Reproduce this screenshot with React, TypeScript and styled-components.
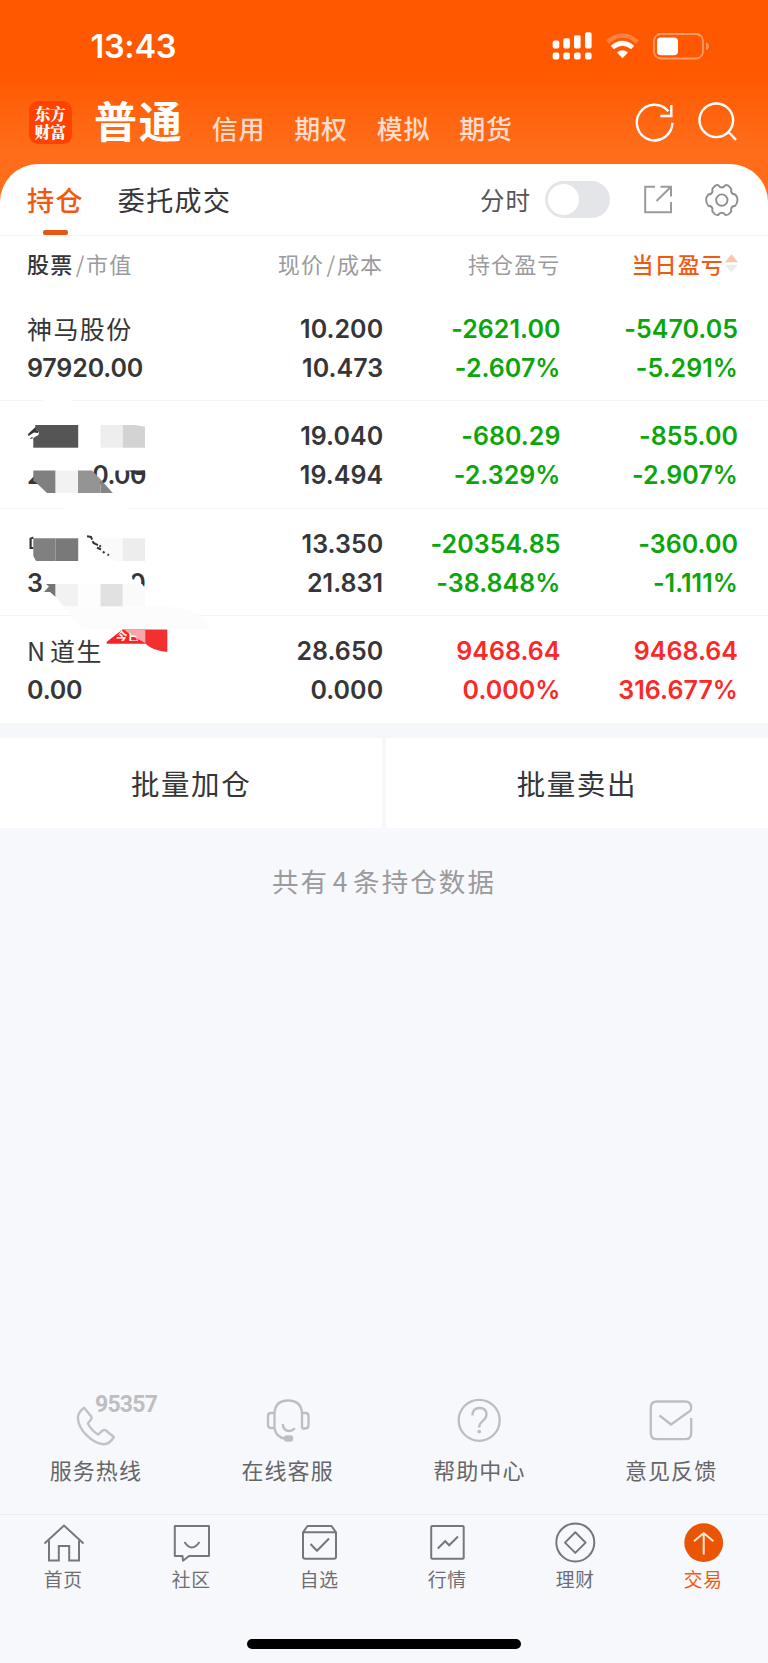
import React from 'react';
import styled, { createGlobalStyle } from 'styled-components';

const cjk = '"Noto Sans CJK SC", "Noto Sans", sans-serif';
const latin = 'Inter, "Noto Sans CJK SC", sans-serif';
const ORANGE = '#f05a10';
const GREEN = '#0ca50c';
const RED = '#fb2828';
const INK = '#363638';

const GlobalStyle = createGlobalStyle`
  * { box-sizing: border-box; }
  body { margin: 0; background: #f7f8fb; font-family: ${cjk}; color: ${INK}; }
  svg { display: block; flex: none; overflow: visible; }
`;

const Screen = styled.div`
  width: 768px;
  height: 1663px;
  display: flex;
  flex-direction: column;
  overflow: hidden;
  background: #f7f8fb;
`;

const Top = styled.header`
  flex: none;
  background: linear-gradient(#ff5800 0, #ff5800 72px, #ff6d1a 150px, #ff6d1a 100%);
`;

const StatusBar = styled.div`
  height: 92px;
  padding: 0 59px 0 90.5px;
  display: flex;
  align-items: center;
  color: #fff;
`;

const Clock = styled.time`
  font: 600 32.5px/40px ${latin};
  letter-spacing: -0.3px;
  margin-right: auto;
  padding-top: 2px;
`;

const NavBar = styled.nav`
  height: 71.5px;
  padding: 0 31px 0 29px;
  display: flex;
  align-items: flex-start;
`;

const Logo = styled.div`
  width: 43px;
  height: 43px;
  margin-top: 9px;
  padding: 4px 5.5px;
  border-radius: 9px;
  background: #ff4200;
  color: #fff;
  font: 900 15.8px/17.5px "Noto Serif CJK SC", ${cjk};
  flex: none;
`;

const AccountMain = styled.div`
  margin-left: 22px;
  font-size: 43px;
  line-height: 55px;
  font-weight: 700;
  letter-spacing: 1.8px;
  color: #fff;
  width: 93px;
  white-space: nowrap;
`;

const Account = styled.div`
  margin-top: 16px;
  width: 82.5px;
  padding-left: 2px;
  font-size: 26px;
  line-height: 40px;
  font-weight: 500;
  letter-spacing: 0.8px;
  color: #ffdccb;
  white-space: nowrap;
  transform: translateX(22.8px);
`;

const NavActions = styled.div`
  margin: 10px 0 0 auto;
  display: flex;
  gap: 25px;
`;

const TabRow = styled.div`
  height: 72px;
  padding: 0 29px 0 27px;
  display: flex;
  align-items: center;
  background: #fff;
  border-radius: 38px 38px 0 0;
  border-bottom: 1.5px solid #f3f4f6;
`;

const Tab = styled.div<{ $active?: boolean }>`
  height: 100%;
  margin-right: 34px;
  padding-top: 16px;
  display: flex;
  flex-direction: column;
  align-items: center;
  justify-content: space-between;
  font-size: 27px;
  line-height: 40px;
  letter-spacing: 1.4px;
  font-weight: ${p => (p.$active ? 500 : 400)};
  color: ${p => (p.$active ? ORANGE : INK)};
  &::after {
    content: '';
    width: 25px;
    height: 5px;
    border-radius: 2px;
    background: ${p => (p.$active ? '#e9560f' : 'transparent')};
  }
`;

const SwitchLabel = styled.span`
  margin-left: auto;
  font-size: 24.5px;
  letter-spacing: 1px;
  color: #555558;
`;

const Switch = styled.div`
  width: 65px;
  height: 37px;
  margin: 0 34px 0 14px;
  padding: 3px;
  border-radius: 19px;
  background: #e4e5e8;
  &::before {
    content: '';
    display: block;
    width: 31px;
    height: 31px;
    border-radius: 50%;
    background: #fff;
  }
`;

const Table = styled.main`
  flex: none;
  height: 487px;
  background: #fff;
  position: relative;
`;

const gridCols = `
  display: grid;
  grid-template-columns: 200px 156.2px 177.3px 177.5px;
  padding-left: 27px;
`;

const HeadRow = styled.div`
  ${gridCols}
  height: 58px;
  padding-bottom: 3px;
  align-items: center;
`;

const HeadCell = styled.div<{ $left?: boolean; $active?: boolean }>`
  display: flex;
  justify-content: ${p => (p.$left ? 'flex-start' : 'flex-end')};
  font-size: 22px;
  letter-spacing: 1.15px;
  font-weight: ${p => (p.$active ? 500 : 400)};
  color: ${p => (p.$active ? ORANGE : '#9b9b9d')};
  white-space: nowrap;
  align-items: center;
  b { font-weight: 500; color: ${INK}; }
  i { font-style: normal; margin: 0 0.5px 0 2.5px; }
`;

const Row = styled.div`
  ${gridCols}
  height: 107.6px;
  padding-top: 16.2px;
  border-bottom: 1.5px solid #f4f5f7;
  &:last-of-type { border-bottom: 0; }
`;

const Cell = styled.div<{ $tone?: string; $left?: boolean }>`
  display: flex;
  flex-direction: column;
  align-items: ${p => (p.$left ? 'flex-start' : 'flex-end')};
  font: 600 25px/39px ${latin};
  color: ${p => p.$tone || INK};
`;

const Name = styled.span`
  font: 400 25px/37px ${cjk};
  letter-spacing: 1.4px;
  word-spacing: -3.5px;
  height: 39px;
`;

const Num = styled.span<{ $tight?: boolean }>`
  height: 39px;
  letter-spacing: ${p => (p.$tight ? -0.15 : 0.04)}px;
`;

const Mosaic = styled.svg`
  position: absolute;
  left: 0;
  top: 0;
`;

const Actions = styled.div`
  flex: none;
  display: flex;
  gap: 3.5px;
  padding: 15.5px 0 0;
  background: #f5f7fa;
  height: 105.5px;
`;

const Action = styled.button`
  flex: 1;
  border: 0;
  padding: 0 0 1px 0;
  background: #fff;
  color: ${INK};
  font: 400 28.5px/40px ${cjk};
  letter-spacing: 1.6px;
`;

const Summary = styled.p`
  margin: 32.5px 0 0;
  text-align: center;
  font-size: 26.5px;
  line-height: 40px;
  letter-spacing: 2.1px;
  word-spacing: -4.5px;
  color: #9b9b9d;
`;

const Services = styled.section`
  margin-top: auto;
  flex: none;
  height: 121.5px;
  display: flex;
  padding-right: 1px;
`;

const Service = styled.div`
  width: 191.8px;
  display: flex;
  flex-direction: column;
  align-items: center;
  font-size: 22px;
  line-height: 32px;
  letter-spacing: 1.1px;
  color: #666669;
  svg { margin-bottom: 6px; }
`;

const TabBar = styled.footer`
  flex: none;
  height: 102px;
  display: flex;
  border-top: 1.5px solid #ececef;
`;

const TabItem = styled.div<{ $active?: boolean }>`
  flex: 1;
  padding-top: 7px;
  display: flex;
  flex-direction: column;
  align-items: center;
  font-size: 18.8px;
  line-height: 26px;
  color: ${p => (p.$active ? ORANGE : '#6e6e72')};
  span { letter-spacing: 0.8px; margin-right: 1.5px; }
  svg { margin-bottom: 4px; }
`;

const HomeArea = styled.div`
  flex: none;
  height: 47px;
  padding-top: 23px;
  display: flex;
  justify-content: center;
`;

const HomeIndicator = styled.div`
  width: 274px;
  height: 10px;
  border-radius: 5px;
  background: #000;
`;

const holdings = [
  { name: '神马股份', value: '97920.00', price: '10.200', cost: '10.473', pl: '-2621.00', plp: '-2.607%', day: '-5470.05', dayp: '-5.291%', tone: GREEN },
  { name: '', value: '', price: '19.040', cost: '19.494', pl: '-680.29', plp: '-2.329%', day: '-855.00', dayp: '-2.907%', tone: GREEN },
  { name: '', value: '', price: '13.350', cost: '21.831', pl: '-20354.85', plp: '-38.848%', day: '-360.00', dayp: '-1.111%', tone: GREEN },
  { name: 'N 道生', value: '0.00', price: '28.650', cost: '0.000', pl: '9468.64', plp: '0.000%', day: '9468.64', dayp: '316.677%', tone: RED },
];

const SignalIcon = () => (
  <svg width="40" height="28" viewBox="552 31.5 40 28" fill="#fff" style={{ marginRight: 14 }}>
    <rect x="552.7" y="40" width="6.6" height="8" rx="1.8" />
    <rect x="563.3" y="37.7" width="6.6" height="10.3" rx="1.8" />
    <rect x="574" y="34.7" width="6.6" height="13.3" rx="1.8" />
    <rect x="585" y="31.7" width="6.6" height="16.3" rx="1.8" />
    {[552.7, 563.3, 574, 585].map(x => (
      <rect key={x} x={x} y="52" width="6.6" height="7" rx="2" />
    ))}
  </svg>
);

const WifiIcon = () => (
  <svg width="33" height="26" viewBox="606 32.5 33 26" fill="none" style={{ marginRight: 14 }}>
    <path d="M607.5 41.5 Q622.5 28.5 637.5 41.5" stroke="#ff8142" strokeWidth="4.4" />
    <path d="M612.3 47 Q622.5 38.5 632.7 47" stroke="#fff" strokeWidth="4.6" />
    <path d="M617 52 Q622.5 47.5 628 52 L622.5 57.7 Z" fill="#fff" />
  </svg>
);

const BatteryIcon = () => (
  <svg width="56" height="27" viewBox="653 31.8 56 27" fill="none">
    <rect x="654" y="32.8" width="49" height="24.5" rx="7" stroke="#ff9a66" strokeWidth="1.8" />
    <rect x="657" y="36.2" width="21" height="17.8" rx="4" fill="#fff" />
    <path d="M706 41.3 Q709 42.3 709 45.2 Q709 48 706 49 Z" fill="#ff9a66" />
  </svg>
);

const RefreshIcon = () => (
  <svg width="38" height="40" viewBox="636 102 38 40" fill="none" stroke="#fff" strokeWidth="2.4">
    <path d="M672.4 122.8 A17.8 17.8 0 1 1 668.4 111.3" />
    <path d="M671.3 105 V116 H660.3" />
  </svg>
);

const SearchIcon = () => (
  <svg width="38" height="40" viewBox="699 102 38 40" fill="none" stroke="#fff" strokeWidth="2.4">
    <circle cx="716.3" cy="120.3" r="16.8" />
    <path d="M728 131.5 L736 139.8" />
  </svg>
);

const ShareIcon = () => (
  <svg width="28" height="28" viewBox="644 185 28 28" fill="none" stroke="#9b9b9e" strokeWidth="2" style={{ marginRight: 33 }}>
    <path d="M655 186.8 H645.2 V212.3 H671 V202 M660.5 186.8 H671 V196.5 M671 186.8 L656.5 201" />
  </svg>
);

const GearIcon = () => (
  <svg width="34" height="33" viewBox="705.5 182.5 34 33" fill="none" stroke="#8f8f93" strokeWidth="1.9">
    <circle cx="722.3" cy="199.6" r="5.7" />
    <path d="M713.8 187.2 Q715.8 184.2 718.6 184.6 Q720 187 722.3 187 Q724.6 187 726 184.6 Q728.8 184.2 730.8 187.2 Q732.3 188.2 731.6 191 Q732.2 193.8 735.8 194 Q738 196.5 738 199.6 Q738 202.8 735.8 205.2 Q732.2 205.4 731.6 208.2 Q732.3 211 730.8 212 Q728.8 215 726 214.6 Q724.6 212.2 722.3 212.2 Q720 212.2 718.6 214.6 Q715.8 215 713.8 212 Q712.3 211 713 208.2 Q712.4 205.4 708.8 205.2 Q706.6 202.8 706.6 199.6 Q706.6 196.5 708.8 194 Q712.4 193.8 713 191 Q712.3 188.2 713.8 187.2 Z" />
  </svg>
);

const SortIcon = () => (
  <svg width="13" height="20" viewBox="725 254 13 20" style={{ marginLeft: 1 }}>
    <path d="M731.5 255.3 L738 263.2 H725 Z" fill="#fac5ab" />
    <path d="M731.5 273.5 L738 265.8 H725 Z" fill="#ebebed" />
  </svg>
);

/* Pixelated patches that hide the holder's private rows */
const PrivacyMosaic = () => (
  <Mosaic width="230" height="487" viewBox="0 236 230 487" fontFamily="Inter" fontWeight="600" fontSize="25" fill={INK}>
    <rect x="43" y="398" width="28" height="5" fill="#fff" />
    <rect x="63" y="505" width="66" height="6" fill="#fff" />

    <rect x="33.3" y="425" width="44.9" height="22.7" fill="#555" />
    <path d="M33 424.5 H35.5 L35 429 L39 431.5 L38.5 435 L33 438 Z" fill="#fff" />
    <path d="M28 434 L35.5 427 L36 430 L38.8 431 L38 433 L34 432.5 L28.5 436 Z M29.5 439 L32.5 436.5 V438.5 Z" />
    <rect x="100.5" y="425" width="22.3" height="22.7" fill="#eee" />
    <path d="M122.8 425 H135 L145 426.8 V447.7 H122.8 Z" fill="#d3d3d3" />

    <text x="27" y="484">2</text>
    <text x="92.2" y="484.3" letterSpacing="-0.6">0.00</text>
    <rect x="26" y="463" width="21" height="12" fill="#fff" />
    <path d="M111 463 H147 V470.6 H111 Z" fill="#fff" />
    <path d="M128 470.6 H145 V475 H137 Z" />
    <path d="M33.3 470.6 H55.6 V493 H47 L33.3 480 Z" fill="#808080" />
    <rect x="55.6" y="470.6" width="22.4" height="22.4" fill="#f2f2f2" />
    <path d="M78 470.6 H92 L100.5 479.3 V493 H78 Z" fill="#949494" />
    <path d="M100.5 479.3 L112.8 493 H100.5 Z" fill="#858585" />

    <path d="M29.5 538 L33.3 536.5 V539 H31.7 V547 H33.3 V549 H29.5 Z" />
    <path d="M33.3 538.3 H55.6 V561 H36 L33.3 556 Z" fill="#808080" />
    <rect x="55.6" y="538.3" width="22.6" height="22.7" fill="#797979" />
    <path d="M100.5 538.3 H122.8 V561 H116 L100.5 552 Z" fill="#fafafa" />
    <rect x="122.8" y="538.3" width="22.2" height="22.7" fill="#ededed" />
    <path d="M87 536.3 L91 537 L93.5 543 L101 546.5" fill="none" stroke={INK} strokeWidth="2" strokeDasharray="7 1.5" />
    <path d="M97 547.5 L101 549.5 M103 551.5 L104.5 553 M107.5 554.5 L109 555.2" stroke={INK} strokeWidth="2" />

    <text x="27" y="592.3">3</text>
    <text x="129.2" y="592.3">0</text>
    <path d="M128 572 L131.5 572 L132.5 579.5 L140 579.5 L142 588 L147 588 V595 H128 Z" fill="#fff" />
    <path d="M44 592 L49 586.5 L46 584 H55.6 V597 L50 592 Z" fill="#747476" />
    <path d="M55.6 584 H78 V606.6 H64 L55.6 597 Z" fill="#f2f2f2" />
    <rect x="78" y="584" width="22.5" height="22.6" fill="#fdfdfd" />
    <rect x="100.5" y="584" width="22.3" height="22.6" fill="#e1e1e1" />
    <path d="M122.8 584 H142 L145 588 V606.6 H122.8 Z" fill="#fafafa" />
    <path d="M64 606.6 H170 C190 608 203 615 211 629.3 H82 Z" fill="#fcfcfc" />

    <path d="M106.5 642 L122.5 629.5 H145.3 V643.8 H107 Z" fill="#f92224" />
    <path d="M124 629.5 H145.3 V643 L132 636 Z" fill="#fba6a6" />
    <clipPath id="badgeCut"><path d="M114 641 L122 629.5 L136 636 L138 641 Z" /></clipPath>
    <text x="114.5" y="641" fontFamily="Noto Sans CJK SC" fontSize="13" fontWeight="700" fill="#fff" clipPath="url(#badgeCut)">今日</text>
    <path d="M145.3 629.5 H167.3 V652 Q153 651 145.3 643.5 Z" fill="#f23030" />
  </Mosaic>
);

const HotlineIcon = () => (
  <svg width="84" height="54" viewBox="54.5 1393 84 54" fill="none" stroke="#c2c2c6" strokeWidth="2.4">
    <path strokeLinejoin="round" d="M84.5 1407.8 L92 1416.8 Q92.5 1418.2 91.6 1419.3 L88.3 1423.5 Q92 1430.5 98.6 1434.6 L103.2 1430.4 Q104.5 1429.5 106 1430.2 L114.4 1437 Q110 1444.2 104.5 1444.3 C93 1443.8 78.8 1430 78.4 1418 Q78.5 1412.3 84.5 1407.8 Z" />
    <text x="95.5" y="1411.8" textLength="64" fill="#bebec2" stroke="none" fontFamily="Roboto" fontWeight="700" fontSize="23">95357</text>
  </svg>
);

const HeadsetIcon = () => (
  <svg width="44" height="54" viewBox="266 1393 44 54" fill="none" stroke="#bebec2" strokeWidth="2.3">
    <path d="M274.5 1428 V1413.5 Q275 1400.5 288 1400.5 Q301.5 1400.5 302 1413.5 V1428.5 M274.5 1428 Q276 1437.5 285 1438.5" />
    <path d="M274.5 1413 H271 Q268 1413 268 1416 V1425 Q268 1428 271 1428 H274.5 M302 1413 H305.5 Q308.5 1413 308.5 1416 V1425 Q308.5 1428.5 305.5 1428.5 H302" />
    <path d="M282.7 1424 Q283.5 1431 289 1431 Q293 1431 294.7 1428" />
    <rect x="284.5" y="1436" width="8" height="5" rx="2.2" fill="#bebec2" strokeWidth="1.5" />
  </svg>
);

const HelpIcon = () => (
  <svg width="44" height="54" viewBox="457.5 1393 44 54" fill="none" stroke="#bebec2" strokeWidth="2.3">
    <circle cx="479.7" cy="1420.3" r="20.5" />
    <path d="M473 1415.5 Q473 1408 480 1408 Q487 1408 487 1414.5 Q487 1418 483 1421.2 Q479.7 1424 479.7 1427.5" />
    <circle cx="479.7" cy="1431.6" r="1.1" fill="#bebec2" strokeWidth="1.6" />
  </svg>
);

const FeedbackIcon = () => (
  <svg width="44" height="54" viewBox="649.5 1393 44 54" fill="none" stroke="#bebec2" strokeWidth="2.3">
    <path d="M691.7 1418 V1433 Q691.7 1439.2 685.5 1439.2 H657.5 Q651.3 1439.2 651.3 1433 V1407.5 Q651.3 1401.5 657.5 1401.5 H685.5 Q691.7 1401.5 691.7 1408 Q691.7 1410.3 690 1411.3 L671.5 1424.5 L660 1415.5" />
  </svg>
);

const tabStroke = { fill: 'none', stroke: '#77777b', strokeWidth: 2 };

const HomeIcon = () => (
  <svg width="40" height="40" viewBox="44 1522 40 40" {...tabStroke}>
    <path d="M44.5 1543.5 L64 1525.5 L83.5 1543.5 M49 1540.5 V1560.5 H58.8 V1546 H69.2 V1560.5 H79 V1540.5" />
  </svg>
);
const CommunityIcon = () => (
  <svg width="40" height="40" viewBox="172 1522 40 40" {...tabStroke}>
    <path strokeLinejoin="round" d="M174.8 1526 H209 V1556 H189 L183 1560.7 L182.5 1556 H174.8 Z" />
    <path d="M184.5 1542 Q191.8 1553 199.5 1542" />
  </svg>
);
const WatchIcon = () => (
  <svg width="40" height="40" viewBox="300 1522 40 40" {...tabStroke}>
    <path strokeLinejoin="round" d="M303 1532.3 L307.5 1526 H331.5 L336 1532.3 V1556.5 Q336 1558.8 333.8 1558.8 H305.2 Q303 1558.8 303 1556.5 Z M303 1532.3 H336 M310.5 1544 L317 1550.8 L329 1538.5" />
  </svg>
);
const QuoteIcon = () => (
  <svg width="40" height="40" viewBox="428 1522 40 40" {...tabStroke}>
    <rect x="431.2" y="1526" width="32.5" height="32.8" rx="1" />
    <path d="M437.8 1548.5 L445.2 1541.2 L449.2 1545.3 L458 1536.5" />
  </svg>
);
const WealthIcon = () => (
  <svg width="40" height="40" viewBox="556 1522 40 40" {...tabStroke}>
    <circle cx="575.3" cy="1542.4" r="19" />
    <path d="M575.3 1532.3 L585.6 1542.6 L575.3 1552.9 L565 1542.6 Z" strokeLinejoin="round" />
  </svg>
);
const TradeIcon = () => (
  <svg width="40" height="40" viewBox="684 1522 40 40" fill="none">
    <circle cx="703.7" cy="1542.7" r="19.4" fill="#ea5504" />
    <path d="M703.7 1554.5 V1533 M694 1541.3 L703.7 1533 L713.4 1541.3" stroke="#ffe6d8" strokeWidth="2" />
  </svg>
);

export default function App() {
  return (
    <Screen>
      <GlobalStyle />
      <Top>
        <StatusBar>
          <Clock>13:43</Clock>
          <SignalIcon />
          <WifiIcon />
          <BatteryIcon />
        </StatusBar>
        <NavBar>
          <Logo>东方财富</Logo>
          <AccountMain>普通</AccountMain>
          {['信用', '期权', '模拟', '期货'].map(t => <Account key={t}>{t}</Account>)}
          <NavActions><RefreshIcon /><SearchIcon /></NavActions>
        </NavBar>
        <TabRow>
          <Tab $active>持仓</Tab>
          <Tab>委托成交</Tab>
          <SwitchLabel>分时</SwitchLabel>
          <Switch />
          <ShareIcon />
          <GearIcon />
        </TabRow>
      </Top>
      <Table>
        <HeadRow>
          <HeadCell $left><b>股票</b><i>/</i>市值</HeadCell>
          <HeadCell>现价<i>/</i>成本</HeadCell>
          <HeadCell>持仓盈亏</HeadCell>
          <HeadCell $active>当日盈亏<SortIcon /></HeadCell>
        </HeadRow>
        {holdings.map(h => (
          <Row key={h.price}>
            <Cell $left><Name>{h.name}</Name><Num $tight>{h.value}</Num></Cell>
            <Cell><Num>{h.price}</Num><Num>{h.cost}</Num></Cell>
            <Cell $tone={h.tone}><Num>{h.pl}</Num><Num>{h.plp}</Num></Cell>
            <Cell $tone={h.tone}><Num>{h.day}</Num><Num>{h.dayp}</Num></Cell>
          </Row>
        ))}
        <PrivacyMosaic />
      </Table>
      <Actions>
        <Action>批量加仓</Action>
        <Action>批量卖出</Action>
      </Actions>
      <Summary>共有 4 条持仓数据</Summary>
      <Services>
        <Service><HotlineIcon />服务热线</Service>
        <Service><HeadsetIcon />在线客服</Service>
        <Service><HelpIcon />帮助中心</Service>
        <Service><FeedbackIcon />意见反馈</Service>
      </Services>
      <TabBar>
        <TabItem><HomeIcon /><span>首页</span></TabItem>
        <TabItem><CommunityIcon /><span>社区</span></TabItem>
        <TabItem><WatchIcon /><span>自选</span></TabItem>
        <TabItem><QuoteIcon /><span>行情</span></TabItem>
        <TabItem><WealthIcon /><span>理财</span></TabItem>
        <TabItem $active><TradeIcon /><span>交易</span></TabItem>
      </TabBar>
      <HomeArea><HomeIndicator /></HomeArea>
    </Screen>
  );
}
